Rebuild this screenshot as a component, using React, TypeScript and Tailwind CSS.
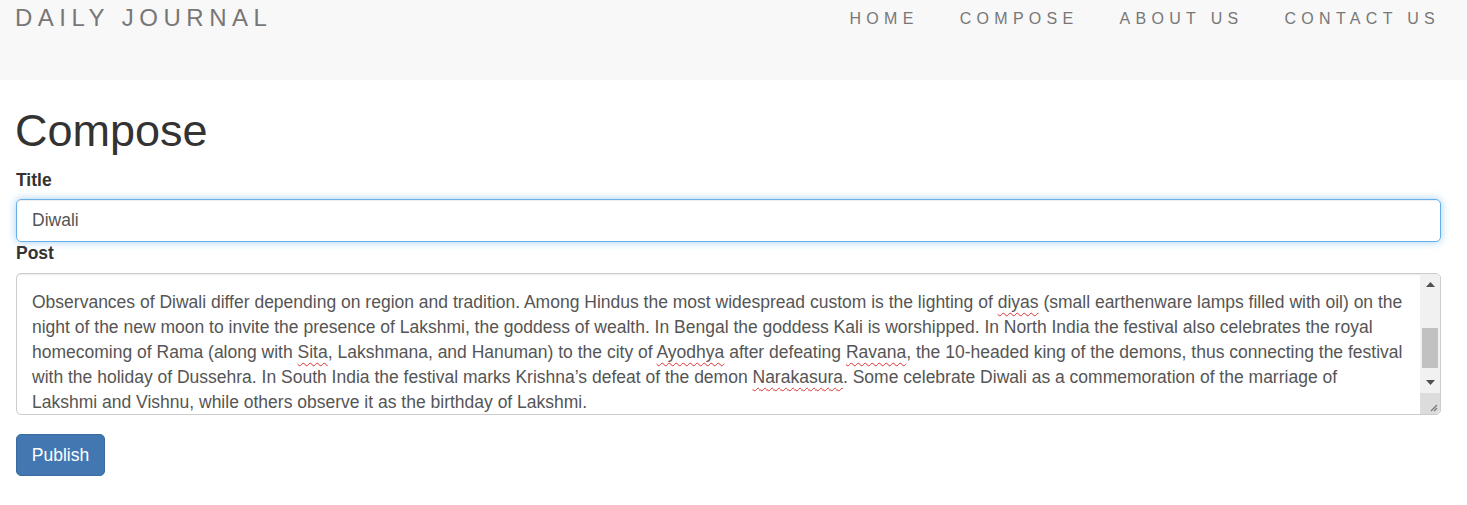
import React from "react";

const Sp = ({ children }: { children: React.ReactNode }) => (
  <span className="underline decoration-wavy decoration-[#e03030] decoration-1 underline-offset-[4px]">
    {children}
  </span>
);

export default function App() {
  return (
    <div className="min-h-[505px] bg-white font-['Liberation_Sans',Arial,sans-serif] text-[#333]">
      <header className="h-[80px] bg-[#f8f8f8] flex items-start justify-between pl-[15px] pr-[27px]">
        <div className="pt-[6px] text-[24px] leading-[24px] tracking-[5.5px] text-[#777]">DAILY JOURNAL</div>
        <nav className="pt-[11px] flex gap-[41px] text-[16px] leading-[16px] tracking-[5.3px] text-[#777]">
          <span>HOME</span>
          <span>COMPOSE</span>
          <span>ABOUT US</span>
          <span>CONTACT US</span>
        </nav>
      </header>

      <main className="px-[16px] pr-[26px]">
        <h1 className="mt-[26px] mb-[13px] text-[45px] leading-[50px] font-normal text-[#333] -ml-[1px]">Compose</h1>

        <label className="block text-[17.5px] leading-[22px] font-bold mb-[8px]">Title</label>
        <div className="h-[43px] rounded-[5px] border border-[#66afe9] shadow-[inset_0_1px_1px_rgba(0,0,0,0.075),0_0_8px_rgba(102,175,233,0.6)] flex items-center px-[15px] text-[17.5px] text-[#555]">
          Diwali
        </div>

        <label className="block text-[17.5px] leading-[22px] font-bold mb-[9px]">Post</label>
        <div className="h-[142px] rounded-[5px] border border-[#ccc] shadow-[inset_0_1px_1px_rgba(0,0,0,0.075)] flex overflow-hidden">
          <div className="flex-1 overflow-hidden pl-[15px] pt-[16px] text-[17.5px] leading-[25px] text-[#555] whitespace-nowrap">
            <div>
              Observances of Diwali differ depending on region and tradition. Among Hindus the most widespread custom is the lighting of <Sp>diyas</Sp> (small earthenware lamps filled with oil) on the
            </div>
            <div>
              night of the new moon to invite the presence of Lakshmi, the goddess of wealth. In Bengal the goddess Kali is worshipped. In North India the festival also celebrates the royal
            </div>
            <div>
              homecoming of Rama (along with <Sp>Sita</Sp>, Lakshmana, and Hanuman) to the city of <Sp>Ayodhya</Sp> after defeating <Sp>Ravana</Sp>, the 10-headed king of the demons, thus connecting the festival
            </div>
            <div>
              with the holiday of Dussehra. In South India the festival marks Krishna’s defeat of the demon <Sp>Narakasura</Sp>. Some celebrate Diwali as a commemoration of the marriage of
            </div>
            <div>Lakshmi and Vishnu, while others observe it as the birthday of Lakshmi.</div>
          </div>
          <div className="w-[20px] flex flex-col bg-[#f1f1f1]">
            <div className="h-[21px] flex items-center justify-center">
              <svg width="9" height="5" viewBox="0 0 9 5"><path d="M0 5 L4.5 0 L9 5 Z" fill="#505050" /></svg>
            </div>
            <div className="flex-1 flex flex-col">
              <div className="h-[33px]" />
              <div className="h-[40px] mx-[2px] bg-[#c1c1c1]" />
            </div>
            <div className="h-[21px] flex items-center justify-center">
              <svg width="9" height="5" viewBox="0 0 9 5"><path d="M0 0 L9 0 L4.5 5 Z" fill="#505050" /></svg>
            </div>
            <div className="h-[21px] bg-[#dcdcdc] flex items-end justify-end p-[2px]">
              <svg width="10" height="10" viewBox="0 0 10 10">
                <path d="M9 3 L3 9 M9 6 L6 9" stroke="#777" strokeWidth="1.2" />
              </svg>
            </div>
          </div>
        </div>

        <button className="mt-[19px] h-[42px] w-[89px] rounded-[5px] bg-[#4377b1] border border-[#3a6aa0] text-white text-[17.5px] leading-[25px]">
          Publish
        </button>
      </main>
    </div>
  );
}
